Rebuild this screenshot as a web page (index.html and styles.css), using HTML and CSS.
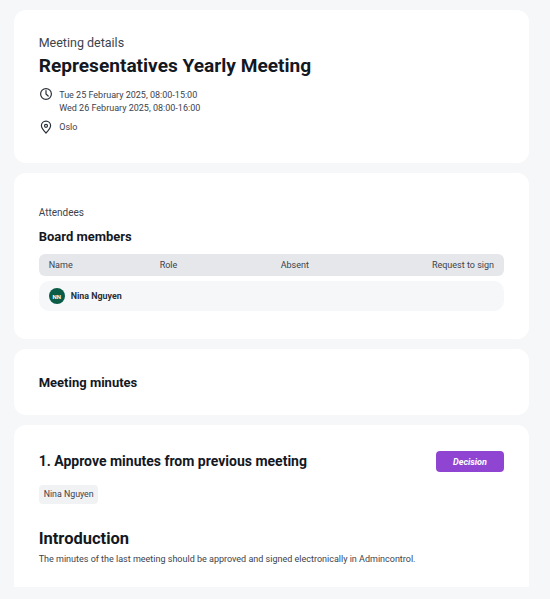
FILE: index.html
```html
<!DOCTYPE html>
<html lang="en">
<head>
<meta charset="utf-8">
<title>Representatives Yearly Meeting</title>
<link rel="stylesheet" href="styles.css">
</head>
<body>
<main class="page">
  <section class="card card-details">
    <p class="eyebrow">Meeting details</p>
    <h1 class="title">Representatives Yearly Meeting</h1>
    <div class="meta meta-time">
      <svg class="icon" viewBox="0 0 14 14" aria-hidden="true"><circle cx="7" cy="7" r="5.4"/><path d="M7 3.6V7l2.2 2"/></svg>
      <div class="meta-text"><div>Tue 25 February 2025, 08:00-15:00</div><div>Wed 26 February 2025, 08:00-16:00</div></div>
    </div>
    <div class="meta meta-place">
      <svg class="icon" viewBox="0 0 14 14" aria-hidden="true"><path d="M7 13C4.6 10.6 2.4 8.4 2.4 5.8a4.6 4.6 0 0 1 9.2 0C11.6 8.4 9.4 10.6 7 13Z"/><circle cx="7" cy="5.8" r="1.5"/></svg>
      <div class="meta-text">Oslo</div>
    </div>
  </section>

  <section class="card card-attendees">
    <p class="label">Attendees</p>
    <h2 class="heading">Board members</h2>
    <div class="table-head">
      <span class="col-name">Name</span>
      <span class="col-role">Role</span>
      <span class="col-absent">Absent</span>
      <span class="col-sign">Request to sign</span>
    </div>
    <div class="table-row">
      <span class="avatar">NN</span>
      <span class="person">Nina Nguyen</span>
    </div>
  </section>

  <section class="card card-minutes">
    <h2 class="heading">Meeting minutes</h2>
  </section>

  <section class="card card-item">
    <div class="item-head">
      <h2 class="item-title">1. Approve minutes from previous meeting</h2>
      <span class="decision">Decision</span>
    </div>
    <span class="tag">Nina Nguyen</span>
    <h3 class="intro">Introduction</h3>
    <p class="body-text">The minutes of the last meeting should be approved and signed electronically in Admincontrol.</p>
  </section>
</main>
</body>
</html>
```
FILE: styles.css
```css
* { box-sizing: border-box; }
html, body { margin: 0; height: 599px; overflow: hidden; }
body { background: #f6f7f9; font-family: Roboto, "Liberation Sans", sans-serif; color: #14181f; }
.page { display: flex; flex-direction: column; gap: 10px; padding: 10px 21px 0 14px; }
.card { background: #fff; border-radius: 12px; padding: 0 25px 0 24.7px; }
p, h1, h2, h3 { margin: 0; }

.card-details { height: 153px; padding-top: 25px; }
.eyebrow { font-size: 12.5px; line-height: 16px; color: #3c434d; }
.title { font-size: 19.1px; line-height: 26px; font-weight: 700; margin-top: 2px; }
.meta { display: flex; gap: 6.5px; font-size: 9px; line-height: 13px; color: #3c434d; }
.meta-time { margin-top: 8px; }
.meta-place { margin-top: 5px; }
.meta-text { padding-top: 2px; }
.icon { width: 14px; height: 14px; fill: none; stroke: #2a3038; stroke-width: 1.2; stroke-linecap: round; stroke-linejoin: round; flex: none; }
.meta-place .meta-text { padding-top: 1px; }

.card-attendees { height: 166px; padding-top: 33px; }
.label { font-size: 10px; line-height: 13px; color: #3c434d; }
.heading { font-size: 13px; line-height: 16px; font-weight: 700; }
.card-attendees .heading { margin-top: 10px; }
.table-head { display: flex; align-items: center; height: 22px; margin-top: 9px; padding: 0 10px; background: #e5e7ea; border-radius: 6px; font-size: 9px; color: #3c434d; }
.col-name { width: 111px; }
.col-role { width: 121px; }
.col-absent { flex: 1; }
.table-row { display: flex; align-items: center; gap: 6px; height: 30px; margin-top: 5px; padding: 0 10px; background: #f6f7f9; border-radius: 10px; }
.avatar { display: flex; align-items: center; justify-content: center; width: 16px; height: 16px; border-radius: 50%; background: #0b5c47; color: #fff; font-size: 6px; font-weight: 700; }
.person { font-size: 8.9px; font-weight: 700; color: #2a3038; }

.card-minutes { display: flex; align-items: center; height: 66px; padding-top: 1px; }

.card-item { height: 162px; padding-top: 26px; border-radius: 12px 12px 0 0; }
.item-head { display: flex; justify-content: space-between; align-items: center; }
.item-title { font-size: 14px; line-height: 19px; font-weight: 700; color: #14181f; }
.decision { display: flex; align-items: center; justify-content: center; width: 68px; height: 21px; background: #8f45d1; border-radius: 4px; color: #fff; font-size: 9px; font-weight: 700; font-style: italic; }
.tag { display: inline-block; margin-top: 13px; padding: 0 4.5px 0 5px; height: 19px; line-height: 19px; background: #f1f2f4; border-radius: 4px; font-size: 8.8px; color: #3c434d; }
.intro { font-size: 16.5px; line-height: 24px; font-weight: 700; margin-top: 23px; }
.body-text { font-size: 9px; line-height: 14px; color: #3c434d; margin-top: 1px; }
```
